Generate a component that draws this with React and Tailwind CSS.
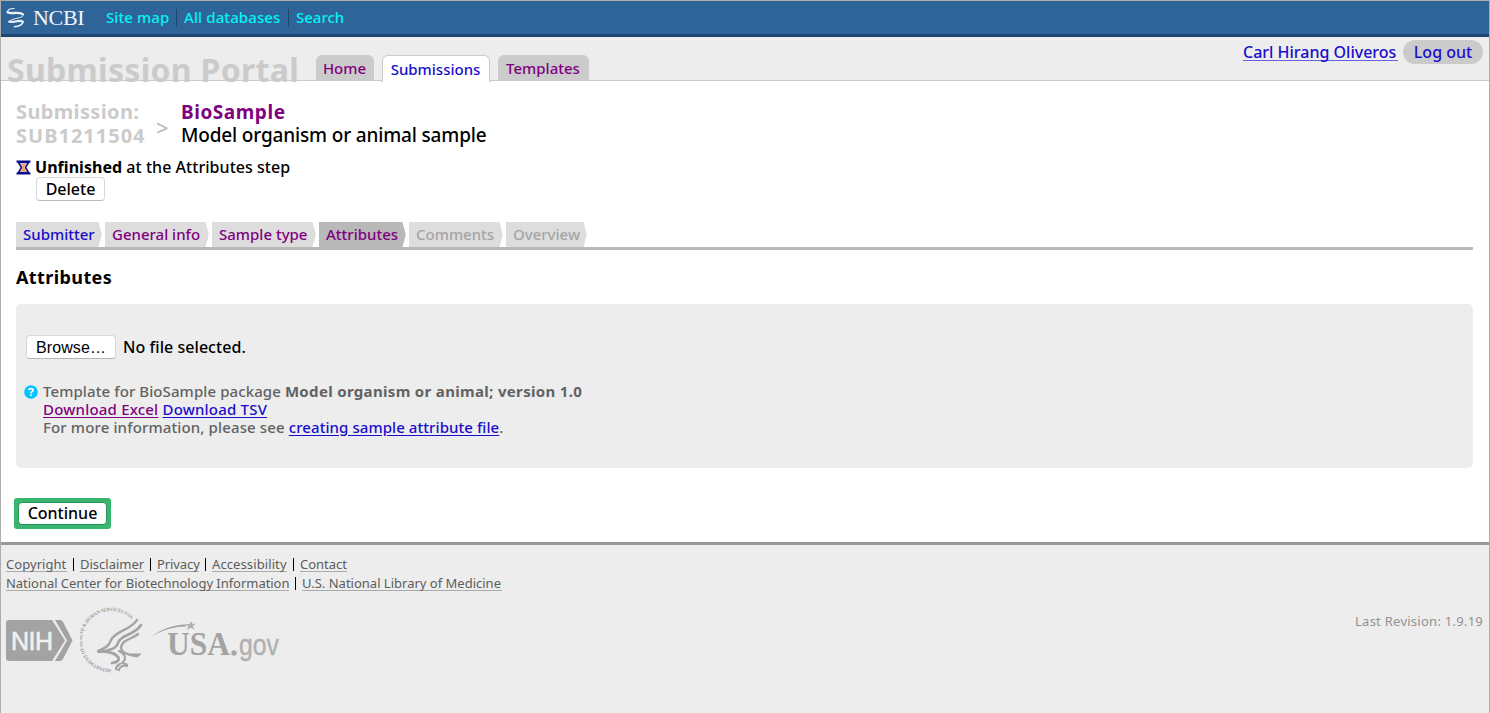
import React from "react";

function NcbiMark() {
  return (
    <svg className="mt-[6px] block h-[22px] w-[20px] shrink-0" viewBox="0 0 20 22" fill="none" stroke="#e9f1f8" strokeLinecap="round">
      <path d="M1.500 5C1.600 2.800 4.500 1.600 8 1.500" strokeWidth="1.200" />
      <path d="M1.600 5.200C5 7.600 11.500 4.200 16.800 7.200" strokeWidth="2.300" />
      <path d="M17.200 7.500C17.800 10.500 13 10.800 9.500 11.600C6.500 12.300 4 13.200 3.200 14.800" strokeWidth="1" />
      <path d="M3.200 14.600C7 16.300 12.500 12.300 16.800 14.600" strokeWidth="2.200" />
      <path d="M17 15C17 17.600 12.500 19.600 8.500 19.700" strokeWidth="1.600" />
    </svg>
  );
}

function TopBar() {
  return (
    <div className="flex h-[36px] shrink-0 border-b-[3px] border-[#1c4570] bg-[#2f6499] pl-[5px] text-[15px] leading-[33px] font-medium text-[#00f5f5]">
      <NcbiMark />
      <span className="ml-[7px] w-[73px] font-['Liberation_Serif',serif] text-[22px] leading-[34px] font-normal tracking-[-0.3px] text-[#f0f5fa]">NCBI</span>
      <span className="w-[70px] tracking-[0.1px]">Site map</span>
      <i className="mt-2 h-[18px] w-px bg-[#1c4570]" />
      <span className="ml-[7px] w-[104px] tracking-[0.1px]">All databases</span>
      <i className="mt-2 h-[18px] w-px bg-[#1c4570]" />
      <span className="ml-[7px]">Search</span>
    </div>
  );
}

function Portal() {
  return (
    <div className="flex h-[44px] shrink-0 border-b border-[#cbcbcb] bg-[#ededed] font-medium">
      <div className="h-[44px] w-[315px] shrink-0 pl-[6px] text-[32px] leading-[65px] font-bold tracking-[0.3px] whitespace-nowrap text-[#cbcbcb]">
        Submission Portal
      </div>
      <a className="mt-[18px] h-[26px] w-[58px] rounded-t-md bg-[#cbcbcb] pr-px text-center leading-[26px] text-[#800080]">Home</a>
      <a className="mt-[18px] ml-[8px] h-[27px] w-[108px] rounded-t-md border border-b-0 border-[#cbcbcb] bg-white pr-px text-center leading-[26px] text-[#1a0dcc]">Submissions</a>
      <a className="mt-[18px] ml-[8px] h-[26px] w-[91px] rounded-t-md bg-[#cbcbcb] pr-px text-center leading-[26px] text-[#800080]">Templates</a>
      <div className="ml-auto flex pr-[6px] text-[16px] text-[#1a0dcc]">
        <a className="mt-[4px] mr-[5px] h-[20px] w-[155px] border-b border-[#6a60d8] leading-[22px] whitespace-nowrap">Carl Hirang Oliveros</a>
        <a className="mt-[3px] h-[24px] w-[80px] rounded-full bg-[#cbcbcb] text-center leading-[24px]">Log out</a>
      </div>
    </div>
  );
}

function Hourglass() {
  return (
    <svg className="mt-[2px] block h-[15px] w-[15px] shrink-0" viewBox="0 0 15 15">
      <path d="M2.500 2.500L5.500 7.500L2.500 12.500H12.500L9.500 7.500L12.500 2.500Z" fill="#fff" stroke="#0b0b88" strokeWidth="1.600" />
      <path d="M4.500 4H10.500L8.300 7.300L10.800 11.500H4.200L6.700 7.300Z" fill="#f2a15e" />
      <path d="M.5 1.500H14.500M.5 13.500H14.500" stroke="#0b0b88" strokeWidth="2.200" />
    </svg>
  );
}

function Step({ width, label, tone }) {
  return (
    <div className={"flex h-[25px] shrink-0 " + width}>
      <span className={"min-w-0 flex-1 pl-[7px] leading-[25px] whitespace-nowrap " + tone}>{label}</span>
      <svg className={"block h-[25px] w-[4px] " + tone} viewBox="0 0 4 25" preserveAspectRatio="none">
        <rect width="4" height="25" fill="white" />
        <path d="M0 0H.5L3.800 12.500L.5 25H0Z" fill={tone.includes("b9b9b9") ? "#b9b9b9" : "#dddddd"} />
      </svg>
    </div>
  );
}

function NihLogo() {
  return (
    <svg className="block h-[41px] w-[67px]" viewBox="0 0 67 41">
      <path d="M3 0H46L59 20.500L46 41H3Q0 41 0 38V3Q0 0 3 0Z" fill="#a3a3a3" />
      <path d="M49 0H54Q56 0 57 2L66.500 20.500L57 39Q56 41 54 41H49L61 20.500Z" fill="#a3a3a3" />
      <text x="5" y="29.500" textLength="42" fill="#f0f0f0" stroke="#f0f0f0" strokeWidth=".6" fontFamily="Liberation Sans, sans-serif" fontSize="25">NIH</text>
    </svg>
  );
}

function HhsLogo() {
  return (
    <svg className="block h-[66px] w-[65px]" viewBox="0 0 65 66" fill="none" stroke="#a3a3a3" strokeLinecap="round">
      <defs>
        <path id="ring" d="M31 62A29 29 0 1 1 53 14" />
      </defs>
      <text fill="#999999" stroke="none" fontFamily="Liberation Serif, serif" fontWeight="bold" fontSize="5">
        <textPath href="#ring" textLength="113" lengthAdjust="spacingAndGlyphs">DEPARTMENT OF HEALTH &amp; HUMAN SERVICES·USA</textPath>
      </text>
      <path d="M57 13C51 23 35 24 31 33C29 40 23 42 18 44" strokeWidth="2.400" />
      <path d="M61 18C54 29 41 27 38 36C36 43 27 43 19 45" strokeWidth="2.600" />
      <path d="M58 27C51 33 43 32 41 40C41 46 48 48 54 48" strokeWidth="2.400" />
      <path d="M52 47L61 47L57 50L52 49Z" fill="#a3a3a3" strokeWidth="1" />
      <path d="M20 44C28 45 34 45 38 50C40 54 37 55 32 56" strokeWidth="2.800" />
      <path d="M39 44C47 48 46 53 42 56C45 57 48 57 47 59C43 58 40 59 39 63L36 62C36 59 38 58 40 57" strokeWidth="2" />
    </svg>
  );
}

function UsaLogo() {
  return (
    <svg className="block h-[42px] w-[130px]" viewBox="0 0 130 42">
      <path d="M0 15C10 7 22 3 35 2.500V4.500C22 5 11 8 0 15Z" fill="#a3a3a3" />
      <path d="M41 -1.500L41.500 2.200L45 1.500L41.700 4.200L43.700 8L39.600 5.500L36 8.500L37.200 4.200L34 2.200L38.500 2.100Z" fill="#b0b0b0" />
      <text x="16" y="33" textLength="63" lengthAdjust="spacingAndGlyphs" fill="#a3a3a3" fontFamily="Liberation Serif, serif" fontWeight="bold" fontSize="34">USA</text>
      <circle cx="83" cy="31" r="2.700" fill="#a8a8a8" />
      <text x="88" y="33" textLength="40" lengthAdjust="spacingAndGlyphs" fill="#b0b0b0" stroke="#b0b0b0" strokeWidth=".4" fontFamily="Liberation Sans, sans-serif" fontSize="29">gov</text>
    </svg>
  );
}

const foot = "h-[15px] border-b border-[#aaaaaa] leading-[15px] whitespace-nowrap";
const bar = "mx-[6px] mt-px h-[13px] w-px bg-black";

function Footer() {
  return (
    <footer className="flex-1 border-t-[3px] border-[#999999] bg-[#ededed] pl-[5px] text-[13px] text-[#5c5c5c]">
      <div className="mt-[12px] flex h-[19px]">
        <a className={foot + " w-[61px] tracking-[0.05px]"}>Copyright</a>
        <i className={bar} />
        <a className={foot + " w-[64px]"}>Disclaimer</a>
        <i className={bar} />
        <a className={foot + " w-[42px] tracking-[-0.1px]"}>Privacy</a>
        <i className={bar} />
        <a className={foot + " w-[75px] tracking-[0.1px]"}>Accessibility</a>
        <i className={bar} />
        <a className={foot + " w-[47px]"}>Contact</a>
      </div>
      <div className="flex h-[19px]">
        <a className={foot + " w-[283px] tracking-[-0.04px]"}>National Center for Biotechnology Information</a>
        <i className={bar} />
        <a className={foot + " w-[200px]"}>U.S. National Library of Medicine</a>
      </div>
      <div className="mt-[12px] flex">
        <div className="mt-[13px]"><NihLogo /></div>
        <div className="ml-[7px]"><HhsLogo /></div>
        <div className="mt-[15px] ml-[6px]"><UsaLogo /></div>
        <span className="mt-[4px] mr-[6px] ml-auto w-[128px] leading-[20px] tracking-[0.26px] whitespace-nowrap text-[#929292]">Last Revision: 1.9.19</span>
      </div>
    </footer>
  );
}

export default function App() {
  return (
    <div className="flex h-[713px] w-[1490px] flex-col overflow-hidden border-x border-t border-[#adadad] bg-white font-['Noto_Sans','Open_Sans',sans-serif] text-[15px] text-black">
      <TopBar />
      <Portal />
      <main className="flex h-[461px] shrink-0 flex-col pr-[16px] pl-[15px] font-medium">
        <div className="mt-[20px] flex h-[48px] whitespace-nowrap">
          <div className="w-[140px] text-[20px] leading-[24px] font-bold text-[#cbcbcb]">
            <div className="mt-[-1px] tracking-[0.36px]">Submission:</div>
            <div className="tracking-[1px]">SUB1211504</div>
          </div>
          <div className="w-[25px] pt-[15px] text-[22px] leading-[23px] text-[#bbbbbb]">&gt;</div>
          <div className="text-[19px] leading-[23px]">
            <div className="font-bold tracking-[0.55px] text-[#800080]">BioSample</div>
            <div className="tracking-[-0.16px]">Model organism or animal sample</div>
          </div>
        </div>
        <div className="mt-[9px] flex h-[19px] text-[16px] leading-[19px]"><Hourglass /><span className="ml-[4px] tracking-[0.04px]"><b>Unfinished</b> at the Attributes step</span></div>
        <button className="ml-[20px] h-[24px] w-[69px] shrink-0 rounded border border-[#d8d8d8] border-b-[#bbbbbb] bg-white text-[16px] leading-[22px]">Delete</button>
        <div className="mt-[21px] flex h-[28px] shrink-0 gap-[3px] border-b-[3px] border-[#b9b9b9]">
          <Step width="w-[86px]" label="Submitter" tone="bg-[#dddddd] text-[#1a0dcc]" />
          <Step width="w-[104px]" label="General info" tone="bg-[#dddddd] text-[#800080]" />
          <Step width="w-[104px]" label="Sample type" tone="bg-[#dddddd] text-[#800080]" />
          <Step width="w-[87px]" label="Attributes" tone="bg-[#b9b9b9] text-[#800080]" />
          <Step width="w-[94px]" label="Comments" tone="bg-[#dddddd] text-[#a5a5a5]" />
          <Step width="w-[81px]" label="Overview" tone="bg-[#dddddd] text-[#a5a5a5]" />
        </div>
        <h2 className="mt-[15px] h-[24px] text-[18px] leading-[24px] font-bold tracking-[0.4px]">Attributes</h2>
        <section className="mt-[15px] h-[164px] shrink-0 rounded-[5px] bg-[#ededed]">
          <div className="flex pt-[31px] pl-[10px] text-[16px] leading-[24px]">
            <button className="h-[24px] w-[90px] rounded border border-[#d8d8d8] border-b-[#b5b5b5] bg-white font-['Liberation_Sans',sans-serif] text-[16px] leading-[24px] font-normal tracking-[0.1px]">Browse…</button>
            <span className="ml-[7px] tracking-[0.05px]">No file selected.</span>
          </div>
          <div className="mt-[23px] flex pl-[8px] text-[15px] leading-[18px] tracking-[0.09px] text-[#626262]">
            <svg className="mt-[3px] block h-[14px] w-[14px]" viewBox="0 0 14 14">
              <circle cx="7" cy="7" r="6.800" fill="#00c3ff" />
              <path d="M4.800 5.100C5 3 9.200 3 9.200 5.200C9.200 6.700 7 6.500 7 8.200" fill="none" stroke="white" strokeWidth="1.700" />
              <rect x="6.100" y="9.300" width="1.800" height="1.700" fill="white" />
            </svg>
            <div className="ml-[5px]">
              <div>Template for BioSample package <b className="tracking-[0.33px]">Model organism or animal; version 1.0</b></div>
              <div className="tracking-[0.2px]"><a className="text-[#800080] underline underline-offset-2">Download Excel</a> <a className="text-[#1a0dcc] underline underline-offset-2">Download TSV</a></div>
              <div><span className="tracking-[0.13px]">For more information, please see </span><a className="tracking-[0.07px] text-[#1a0dcc] underline underline-offset-2">creating sample attribute file</a>.</div>
            </div>
          </div>
        </section>
        <div className="mt-[30px] ml-[-2px] h-[31px] w-[97px] shrink-0 rounded-[3px] bg-[#38b670] px-[4px] py-[4px]">
          <button className="block h-[23px] w-full rounded border border-[#269556] bg-white text-[16px] leading-[19px]">Continue</button>
        </div>
      </main>
      <Footer />
    </div>
  );
}
